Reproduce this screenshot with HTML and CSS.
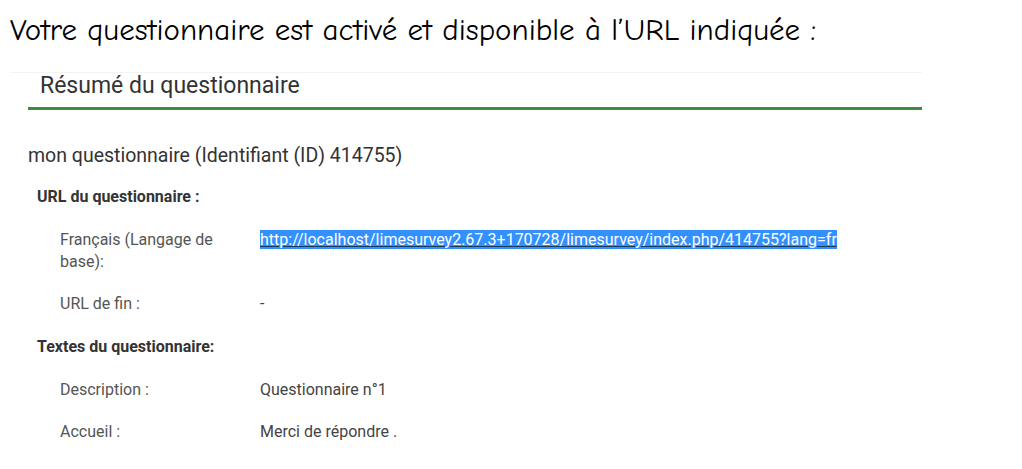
FILE: index.html
```html
<!DOCTYPE html>
<html lang="fr">
<head>
<meta charset="utf-8">
<title>Résumé du questionnaire</title>
<link rel="stylesheet" href="styles.css">
</head>
<body>
<h1 class="intro">Votre questionnaire est activé et disponible à l’URL indiquée :</h1>
<div class="panel">
  <div class="panel-head"><h2>Résumé du questionnaire</h2></div>
  <h3 class="survey-title">mon questionnaire (Identifiant (ID) 414755)</h3>
  <div class="section-label">URL du questionnaire :</div>
  <div class="rows">
    <div class="label">Français (Langage de base):</div>
    <div class="value"><a class="url" href="#">http://localhost/limesurvey2.67.3+170728/limesurvey/index.php/414755?lang=fr</a></div>
    <div class="label">URL de fin :</div>
    <div class="value">-</div>
  </div>
  <div class="section-label">Textes du questionnaire:</div>
  <div class="rows">
    <div class="label">Description :</div>
    <div class="value">Questionnaire n°1</div>
    <div class="label">Accueil :</div>
    <div class="value">Merci de répondre .</div>
  </div>
</div>
</body>
</html>
```

FILE: styles.css
```css
html, body {
  margin: 0;
  padding: 0;
  background: #ffffff;
}
body {
  font-family: Roboto, "Liberation Sans", sans-serif;
  color: #333;
}
.intro {
  margin: 0;
  padding: 10px 0 0 10px;
  height: 72px;
  box-sizing: border-box;
  font-family: "Comic Sans MS", "Comic Neue", cursive;
  font-weight: normal;
  font-size: 31px;
  line-height: 40px;
  color: #000;
  white-space: nowrap;
}
.panel {
  width: 912px;
  margin-left: 10px;
  border-top: 1px solid #f3f3f3;
}
.panel-head {
  margin-left: 18px;
  border-bottom: 3px solid #3d8b40;
  height: 34px;
}
.panel-head h2 {
  margin: 0;
  padding: 0 0 0 12px;
  font-size: 23px;
  line-height: 26px;
  font-weight: normal;
  color: #333;
}
.survey-title {
  margin: 33px 0 0 18px;
  font-size: 19.5px;
  line-height: 26px;
  font-weight: normal;
  color: #333;
}
.section-label {
  margin: 16px 0 0 27px;
  font-size: 16px;
  line-height: 24px;
  font-weight: bold;
  color: #333;
}
.rows {
  display: grid;
  grid-template-columns: 200px 1fr;
  row-gap: 20px;
  margin: 20px 0 20px 50px;
  font-size: 16px;
  line-height: 22px;
  color: #555;
}
.label {
  padding-right: 30px;
}
.value {
  color: #444;
}
.url {
  color: #fff;
  background: #3390ff;
  text-decoration: underline;
  text-decoration-color: #1a3a5a;
}
```
